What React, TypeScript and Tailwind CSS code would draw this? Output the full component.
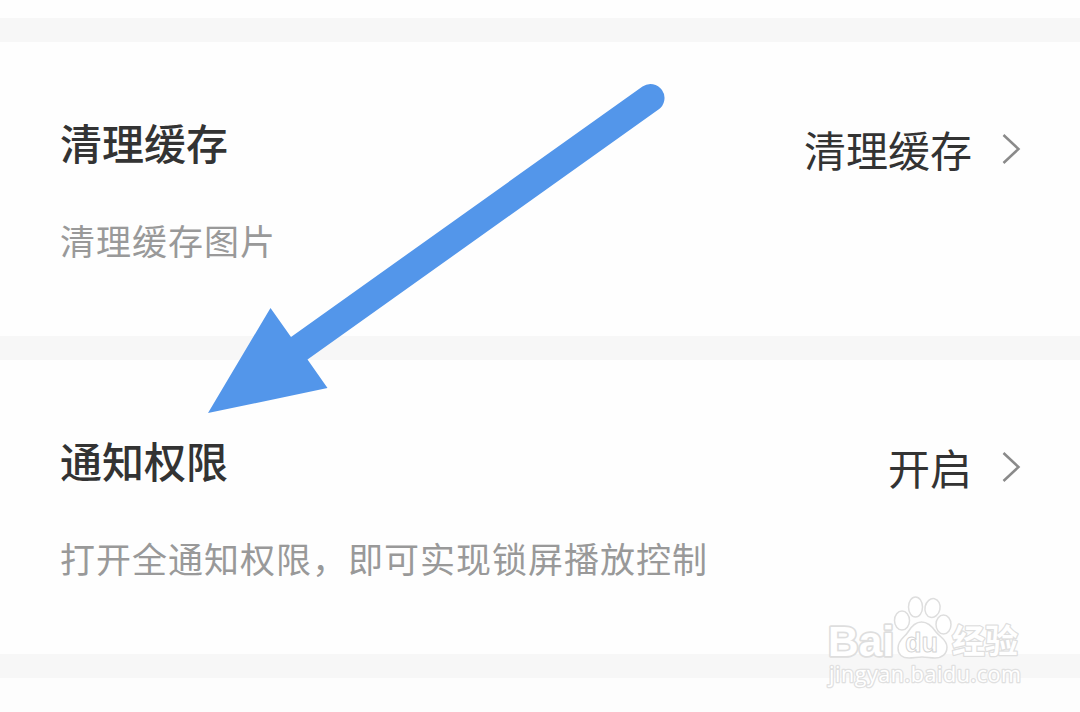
import React from "react";

interface SettingRow {
  title: string;
  description: string;
  action: string;
}

const SETTINGS: SettingRow[] = [
  { title: "清理缓存", description: "清理缓存图片", action: "清理缓存" },
  { title: "通知权限", description: "打开全通知权限，即可实现锁屏播放控制", action: "开启" },
];

const Divider: React.FC = () => <div className="h-6 shrink-0 bg-[#f7f7f7]" />;

const Chevron: React.FC = () => (
  <svg className="w-5 h-8" viewBox="0 0 20 32" fill="none" stroke="#8a8a8a" strokeWidth="2.5">
    <path d="M2.5 2L17.5 16L2.5 30" />
  </svg>
);

const SettingItem: React.FC<SettingRow> = ({ title, description, action }) => (
  <section className="flex h-[294px] shrink-0 justify-between bg-[#fefefe] pl-15 pr-[59px]">
    <div className="flex flex-col">
      <h2 className="mt-[70px] text-[42px] leading-[60px] font-medium text-[#333333]">{title}</h2>
      <p className="mt-[42px] text-[35px] leading-[52px] tracking-[1px] text-[#999999]">{description}</p>
    </div>
    <button className="mt-[76px] flex h-[62px] items-center gap-[29px] text-[42px] leading-[62px] text-[#333333]">
      <span>{action}</span>
      <Chevron />
    </button>
  </section>
);

const Arrow: React.FC = () => (
  <svg className="pointer-events-none absolute left-0 top-0" width="1080" height="712" viewBox="0 0 1080 712">
    <path
      d="M208 413L270.5 308L291 337L642.5 86.5A14 14 0 0 1 658.5 109.5L307.5 359.5L327.5 388Z"
      fill="#5396ea"
    />
  </svg>
);

const Watermark: React.FC = () => (
  <svg
    className="pointer-events-none absolute left-[810px] top-[580px]"
    width="240"
    height="132"
    viewBox="0 0 240 132"
    fill="#ffffff"
    stroke="#dedede"
    strokeWidth="1.5"
    strokeLinejoin="round"
  >
    <text
      x="18"
      y="76"
      fontSize="42"
      fontFamily="'Liberation Sans', Arial, sans-serif"
      fontWeight="700"
      textLength="66"
      lengthAdjust="spacingAndGlyphs"
      paintOrder="stroke"
      strokeWidth="3.5"
    >
      Bai
    </text>
    <ellipse cx="92" cy="40.5" rx="7.5" ry="9.5" />
    <ellipse cx="105.5" cy="27" rx="7" ry="10" />
    <ellipse cx="122.5" cy="28" rx="7.5" ry="9.5" transform="rotate(12 122.5 28)" />
    <ellipse cx="133.5" cy="44.5" rx="7.5" ry="9.5" />
    <path d="M111.5 42C105 42 101 47 98 52C95 57 88 60 88 68C88 75 93 78 99 78C104 78 107 77 112 77C117 77 120 78 125 78C132 78 137 74 137 67C137 60 130 57 126 52C122 46 118 42 111.5 42Z" />
    <text
      x="95"
      y="72"
      fontSize="28"
      fontFamily="'Liberation Sans', Arial, sans-serif"
      fontWeight="700"
      textLength="33"
      lengthAdjust="spacingAndGlyphs"
      stroke="#d4d4d4"
      strokeWidth="1"
    >
      du
    </text>
    <text
      x="142"
      y="72.5"
      fontSize="33"
      fontFamily="'Noto Sans CJK SC', sans-serif"
      fontWeight="700"
      paintOrder="stroke"
      strokeWidth="2.5"
    >
      经验
    </text>
    <text
      x="19"
      y="102"
      fontSize="21.5"
      fontFamily="'Open Sans', 'Noto Sans', sans-serif"
      fontWeight="500"
      textLength="192"
      lengthAdjust="spacing"
      paintOrder="stroke"
      stroke="#e0e0e0"
      strokeWidth="2.5"
    >
      jingyan.baidu.com
    </text>
  </svg>
);

const App: React.FC = () => {
  return (
    <main className="relative flex h-[712px] w-[1080px] flex-col overflow-hidden bg-[#fdfdfd] font-['Noto_Sans_CJK_SC',sans-serif]">
      <div className="h-[18px] shrink-0 bg-[#fefefe]" />
      <Divider />
      {SETTINGS.map((item) => (
        <React.Fragment key={item.title}>
          <SettingItem {...item} />
          <Divider />
        </React.Fragment>
      ))}
      <Arrow />
      <Watermark />
    </main>
  );
};

export default App;
